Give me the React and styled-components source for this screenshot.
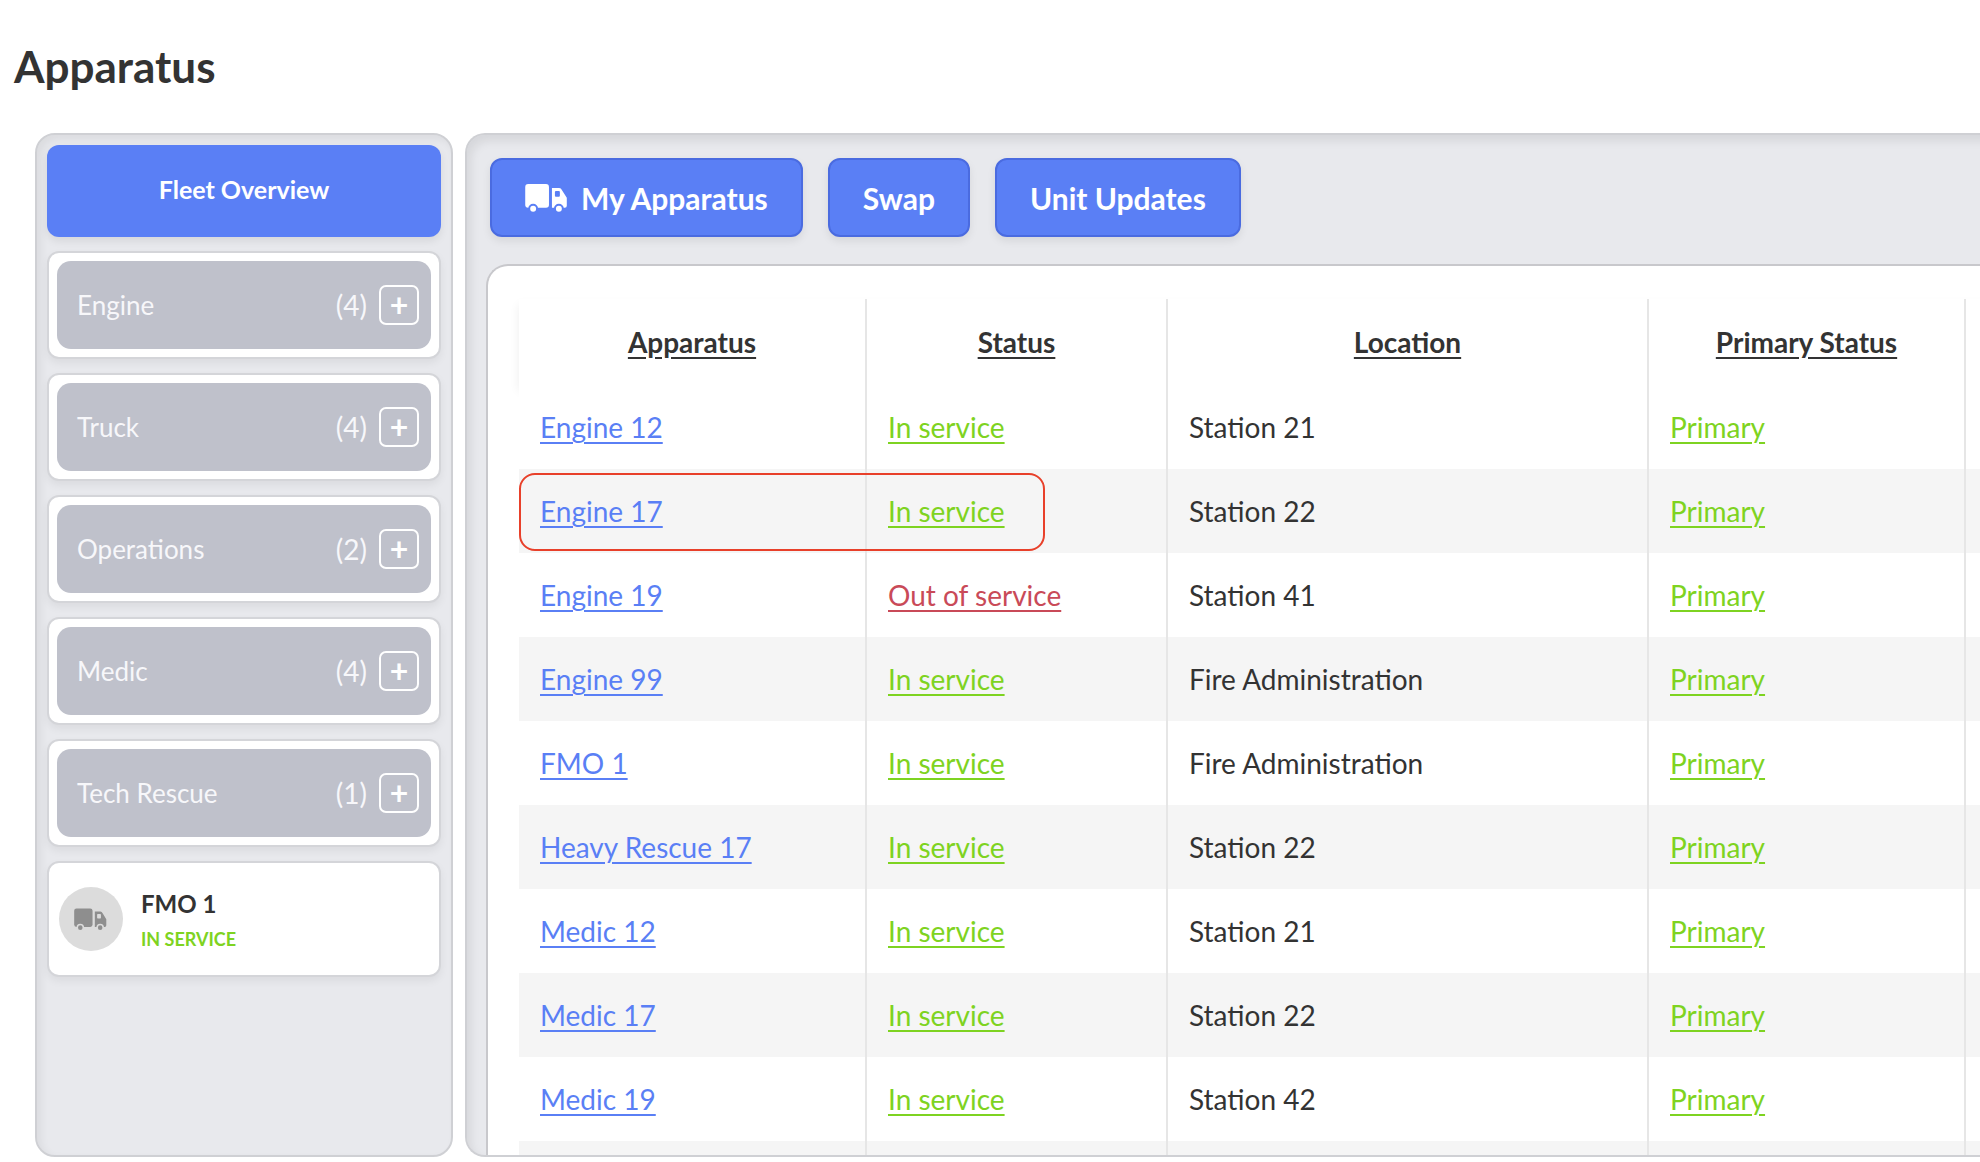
import React from "react";
import styled, { createGlobalStyle } from "styled-components";

const Global = createGlobalStyle`
  html, body { margin: 0; background: #fff; overflow: hidden; }
  body { font-family: Lato, "Open Sans", sans-serif; color: #333; }
`;

const Page = styled.div`
  width: 1980px;
  height: 1162px;
  overflow: hidden;
`;

const Title = styled.h1`
  margin: 0;
  padding: 40px 0 0 14px;
  height: 93px;
  box-sizing: border-box;
  font-size: 44px;
  font-weight: 700;
  color: #333;
`;

const Body = styled.div`
  display: flex;
  gap: 12px;
  padding: 40px 0 0 35px;
`;

const Sidebar = styled.aside`
  width: 418px;
  height: 1024px;
  flex-shrink: 0;
  box-sizing: border-box;
  background: #e8e9ed;
  border: 2px solid #cfd0d4;
  border-radius: 20px;
  box-shadow: inset 4px 4px 8px rgba(0,0,0,0.06);
  padding: 10px 10px;
  display: flex;
  flex-direction: column;
  gap: 14px;
`;

const FleetButton = styled.div`
  height: 92px;
  border-radius: 12px;
  background: #5a7ff5;
  color: #fff;
  font-weight: 700;
  font-size: 25px;
  display: flex;
  align-items: center;
  justify-content: center;
  padding-bottom: 4px;
  box-sizing: border-box;
  box-shadow: 0 4px 8px rgba(0,0,0,0.08);
`;

const CategoryCard = styled.div`
  background: #fff;
  border: 2px solid #d4d5d9;
  border-radius: 12px;
  padding: 8px 8px;
  box-shadow: 0 4px 8px rgba(0,0,0,0.06);
`;

const CategoryInner = styled.div`
  height: 88px;
  border-radius: 14px;
  background: #bfc1cb;
  color: #f7f7fa;
  font-size: 26px;
  display: flex;
  align-items: center;
  padding: 0 12px 0 20px;
`;

const CatLabel = styled.span`
  flex: 1;
`;

const CatCount = styled.span`
  margin-right: 12px;
  font-size: 28px;
`;

const PlusBox = styled.span`
  width: 40px;
  height: 40px;
  border: 2px solid #fff;
  border-radius: 7px;
  box-sizing: border-box;
  display: flex;
  align-items: center;
  justify-content: center;
  font-size: 32px;
  font-weight: 700;
  color: #fff;
  line-height: 1;
`;

const UnitCard = styled.div`
  background: #fff;
  border: 2px solid #d4d5d9;
  border-radius: 12px;
  height: 116px;
  box-sizing: border-box;
  display: flex;
  align-items: center;
  gap: 18px;
  padding: 0 10px;
  box-shadow: 0 4px 8px rgba(0,0,0,0.06);
`;

const Avatar = styled.div`
  width: 64px;
  height: 64px;
  border-radius: 50%;
  background: #dcdcdc;
  display: flex;
  align-items: center;
  justify-content: center;
`;

const UnitName = styled.div`
  font-size: 24px;
  font-weight: 700;
  color: #333;
`;

const UnitStatus = styled.div`
  font-size: 18px;
  font-weight: 700;
  color: #7ed321;
  margin-top: 10px;
`;

const Main = styled.section`
  flex: 1;
  height: 1024px;
  box-sizing: border-box;
  background: #e8e9ed;
  border: 2px solid #cfd0d4;
  border-right: none;
  border-radius: 20px 0 0 20px;
  box-shadow: inset 4px 6px 10px rgba(0,0,0,0.08);
  padding: 23px 0 0 23px;
  display: flex;
  flex-direction: column;
`;

const Toolbar = styled.div`
  display: flex;
  gap: 25px;
  height: 79px;
`;

const ActionButton = styled.div`
  background: #5a7ff5;
  border: 2px solid #4a6be0;
  border-radius: 12px;
  color: #fff;
  font-weight: 700;
  font-size: 30px;
  display: flex;
  align-items: center;
  gap: 12px;
  padding: 0 33px;
  box-shadow: 0 4px 8px rgba(0,0,0,0.08);
`;

const Inner = styled.div`
  margin-top: 27px;
  margin-left: -4px;
  flex: 1;
  background: #fff;
  border: 2px solid #c8c8cc;
  border-right: none;
  border-bottom: none;
  border-radius: 22px 0 0 0;
  padding: 33px 0 0 31px;
  overflow: hidden;
`;

const Table = styled.table`
  border-collapse: collapse;
  width: 1560px;
  table-layout: fixed;
  font-size: 28px;
`;

const HeadRow = styled.tr`
  height: 86px;
  box-shadow: 0 6px 10px rgba(0,0,0,0.07);
`;

const Th = styled.th`
  font-weight: 700;
  text-decoration: underline;
  text-underline-offset: 4px;
  color: #333;
  border-left: 2px solid #e6e6e6;
  &:first-child { border-left: none; }
`;

const Row = styled.tr`
  height: 84px;
  background: ${({ $alt }) => ($alt ? "#f5f5f5" : "#fff")};
`;

const Td = styled.td`
  padding: 0 21px;
  border-left: 2px solid #e6e6e6;
  color: #333;
  &:first-child { border-left: none; position: relative; }
`;

const Link = styled.span`
  color: ${({ $c }) => $c};
  text-decoration: underline;
  text-underline-offset: 4px;
  text-decoration-thickness: 2px;
`;

const Highlight = styled.div`
  position: absolute;
  left: 0;
  top: 4px;
  width: 526px;
  height: 78px;
  box-sizing: border-box;
  border: 2px solid #e8402a;
  border-radius: 16px;
  pointer-events: none;
`;

const Truck = ({ color = "#fff", size = 44, bg = "#5a7ff5" }) => (
  <svg width={size} height={size * 0.72} viewBox="0 0 44 32">
    <rect x="0" y="2" width="24" height="24" rx="3" fill={color} />
    <path d="M27 6h7a3 3 0 0 1 3 2l5 8v8a2 2 0 0 1-2 2H27z" fill={color} />
    <rect x="30" y="9" width="5" height="6" rx="1" fill={bg} />
    <circle cx="8" cy="27" r="4" fill={color} stroke={bg} strokeWidth="2" />
    <circle cx="34" cy="27" r="4" fill={color} stroke={bg} strokeWidth="2" />
  </svg>
);

const categories = [
  ["Engine", 4], ["Truck", 4], ["Operations", 2], ["Medic", 4], ["Tech Rescue", 1],
];

const BLUE = "#5a7ff5";
const GREEN = "#7ed321";
const RED = "#c94a58";

const rows = [
  ["Engine 12", "In service", "Station 21"],
  ["Engine 17", "In service", "Station 22"],
  ["Engine 19", "Out of service", "Station 41"],
  ["Engine 99", "In service", "Fire Administration"],
  ["FMO 1", "In service", "Fire Administration"],
  ["Heavy Rescue 17", "In service", "Station 22"],
  ["Medic 12", "In service", "Station 21"],
  ["Medic 17", "In service", "Station 22"],
  ["Medic 19", "In service", "Station 42"],
];

export default function App() {
  return (
    <Page>
      <Global />
      <Title>Apparatus</Title>
      <Body>
        <Sidebar>
          <FleetButton>Fleet Overview</FleetButton>
          {categories.map(([name, n]) => (
            <CategoryCard key={name}>
              <CategoryInner>
                <CatLabel>{name}</CatLabel>
                <CatCount>({n})</CatCount>
                <PlusBox>+</PlusBox>
              </CategoryInner>
            </CategoryCard>
          ))}
          <UnitCard>
            <Avatar><Truck color="#8e8e8e" size={34} bg="#dcdcdc" /></Avatar>
            <div>
              <UnitName>FMO 1</UnitName>
              <UnitStatus>IN SERVICE</UnitStatus>
            </div>
          </UnitCard>
        </Sidebar>
        <Main>
          <Toolbar>
            <ActionButton><Truck />My Apparatus</ActionButton>
            <ActionButton>Swap</ActionButton>
            <ActionButton>Unit Updates</ActionButton>
          </Toolbar>
          <Inner>
            <Table>
              <colgroup>
                <col style={{ width: 347 }} />
                <col style={{ width: 301 }} />
                <col style={{ width: 481 }} />
                <col style={{ width: 317 }} />
                <col />
              </colgroup>
              <thead>
                <HeadRow>
                  <Th>Apparatus</Th>
                  <Th>Status</Th>
                  <Th>Location</Th>
                  <Th>Primary Status</Th>
                  <Th></Th>
                </HeadRow>
              </thead>
              <tbody>
                {rows.map(([a, s, l], i) => (
                  <Row key={a} $alt={i % 2 === 1}>
                    <Td>
                      {i === 1 && <Highlight />}
                      <Link $c={BLUE}>{a}</Link>
                    </Td>
                    <Td><Link $c={s === "In service" ? GREEN : RED}>{s}</Link></Td>
                    <Td>{l}</Td>
                    <Td><Link $c={GREEN}>Primary</Link></Td>
                    <Td></Td>
                  </Row>
                ))}
                <Row $alt>
                  <Td></Td><Td></Td><Td></Td><Td></Td><Td></Td>
                </Row>
              </tbody>
            </Table>
          </Inner>
        </Main>
      </Body>
    </Page>
  );
}
